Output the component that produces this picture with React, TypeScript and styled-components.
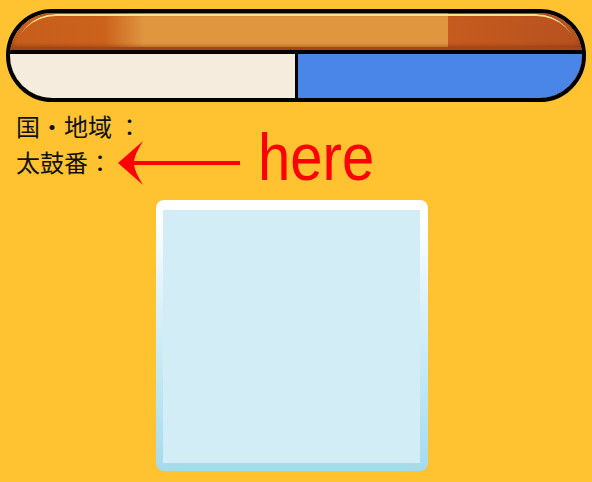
import React from "react";
import styled, { createGlobalStyle } from "styled-components";

const Global = createGlobalStyle`
  html, body { margin: 0; padding: 0; }
  body {
    background: #ffc331;
    font-family: "Noto Sans CJK JP", "Noto Sans", sans-serif;
    width: 592px;
    height: 482px;
    overflow: hidden;
  }
`;

const Page = styled.div`
  display: flex;
  flex-direction: column;
  padding-top: 9px;
`;

const Bar = styled.div`
  margin: 0 6px;
  height: 85px;
  border: 4px solid #000;
  border-radius: 47px;
  overflow: hidden;
  display: flex;
  flex-direction: column;
`;

const BarHeader = styled.div`
  position: relative;
  height: 34px;
  border-bottom: 3px solid #a2471a;
  background: linear-gradient(
    to right,
    #c65d1c 0px,
    #cb631c 95px,
    #de943e 133px,
    #df963f 133px,
    #df963f 438px,
    #c65b1e 438px,
    #b6511f 100%
  );
  box-shadow: inset 3px 0 4px rgba(110, 30, 0, 0.35), inset -3px 0 4px rgba(110, 30, 0, 0.35);
  &::before {
    content: "";
    position: absolute;
    top: 1px;
    left: 4px;
    right: 4px;
    height: 40px;
    border-top: 2px solid #f9e391;
    border-radius: 44px 44px 0 0;
    -webkit-mask-image: linear-gradient(to bottom, #000 0px, #000 6px, transparent 22px);
    mask-image: linear-gradient(to bottom, #000 0px, #000 6px, transparent 22px);
  }
`;

const BarBody = styled.div`
  flex: 1;
  border-top: 4px solid #000;
  display: grid;
  grid-template-columns: 285px 3px 1fr;
  background: #000;
`;

const Cell = styled.div<{ $tone: "cream" | "blue" }>`
  background: ${(p) => (p.$tone === "cream" ? "#f5ecdd" : "#4a86e8")};
`;

const Info = styled.div`
  margin-top: 6px;
  padding-left: 16px;
  font-size: 24px;
  line-height: 36px;
  color: #111;
`;

const Line = styled.div`
  position: relative;
  white-space: pre;
`;

const Callout = styled.div`
  position: absolute;
  left: 102px;
  top: -6px;
  width: 260px;
  height: 50px;
  pointer-events: none;
`;

const Arrow = styled.svg`
  position: absolute;
  left: 0;
  top: 0;
`;

const Here = styled.span`
  position: absolute;
  left: 140px;
  top: -14px;
  font-family: "Liberation Sans", Arial, sans-serif;
  font-size: 66px;
  line-height: 66px;
  color: #ff0000;
  transform: scaleX(0.88);
  transform-origin: left top;
`;

const Frame = styled.div`
  margin: 20px 0 0 156px;
  width: 272px;
  height: 271px;
  box-sizing: border-box;
  padding: 10px 8px 8px 7px;
  border-radius: 8px;
  background: linear-gradient(to bottom, #ffffff 0%, #ffffff 8%, #e3f4fa 30%, #a3dbee 100%);
`;

const Screen = styled.div`
  width: 100%;
  height: 100%;
  background: #d2edf5;
`;

export default function App() {
  return (
    <>
      <Global />
      <Page>
        <Bar>
          <BarHeader />
          <BarBody>
            <Cell $tone="cream" />
            <div />
            <Cell $tone="blue" />
          </BarBody>
        </Bar>
        <Info>
          <Line>国・地域 ：</Line>
          <Line>
            太鼓番：
            <Callout>
              <Arrow width="124" height="50" viewBox="0 0 124 50">
                <path
                  d="M0 25 L25 3 Q17 16 16 23 L122 23 L122 27 L16 27 Q17 34 25 47 Z"
                  fill="#ff0000"
                />
              </Arrow>
              <Here>here</Here>
            </Callout>
          </Line>
        </Info>
        <Frame>
          <Screen />
        </Frame>
      </Page>
    </>
  );
}
